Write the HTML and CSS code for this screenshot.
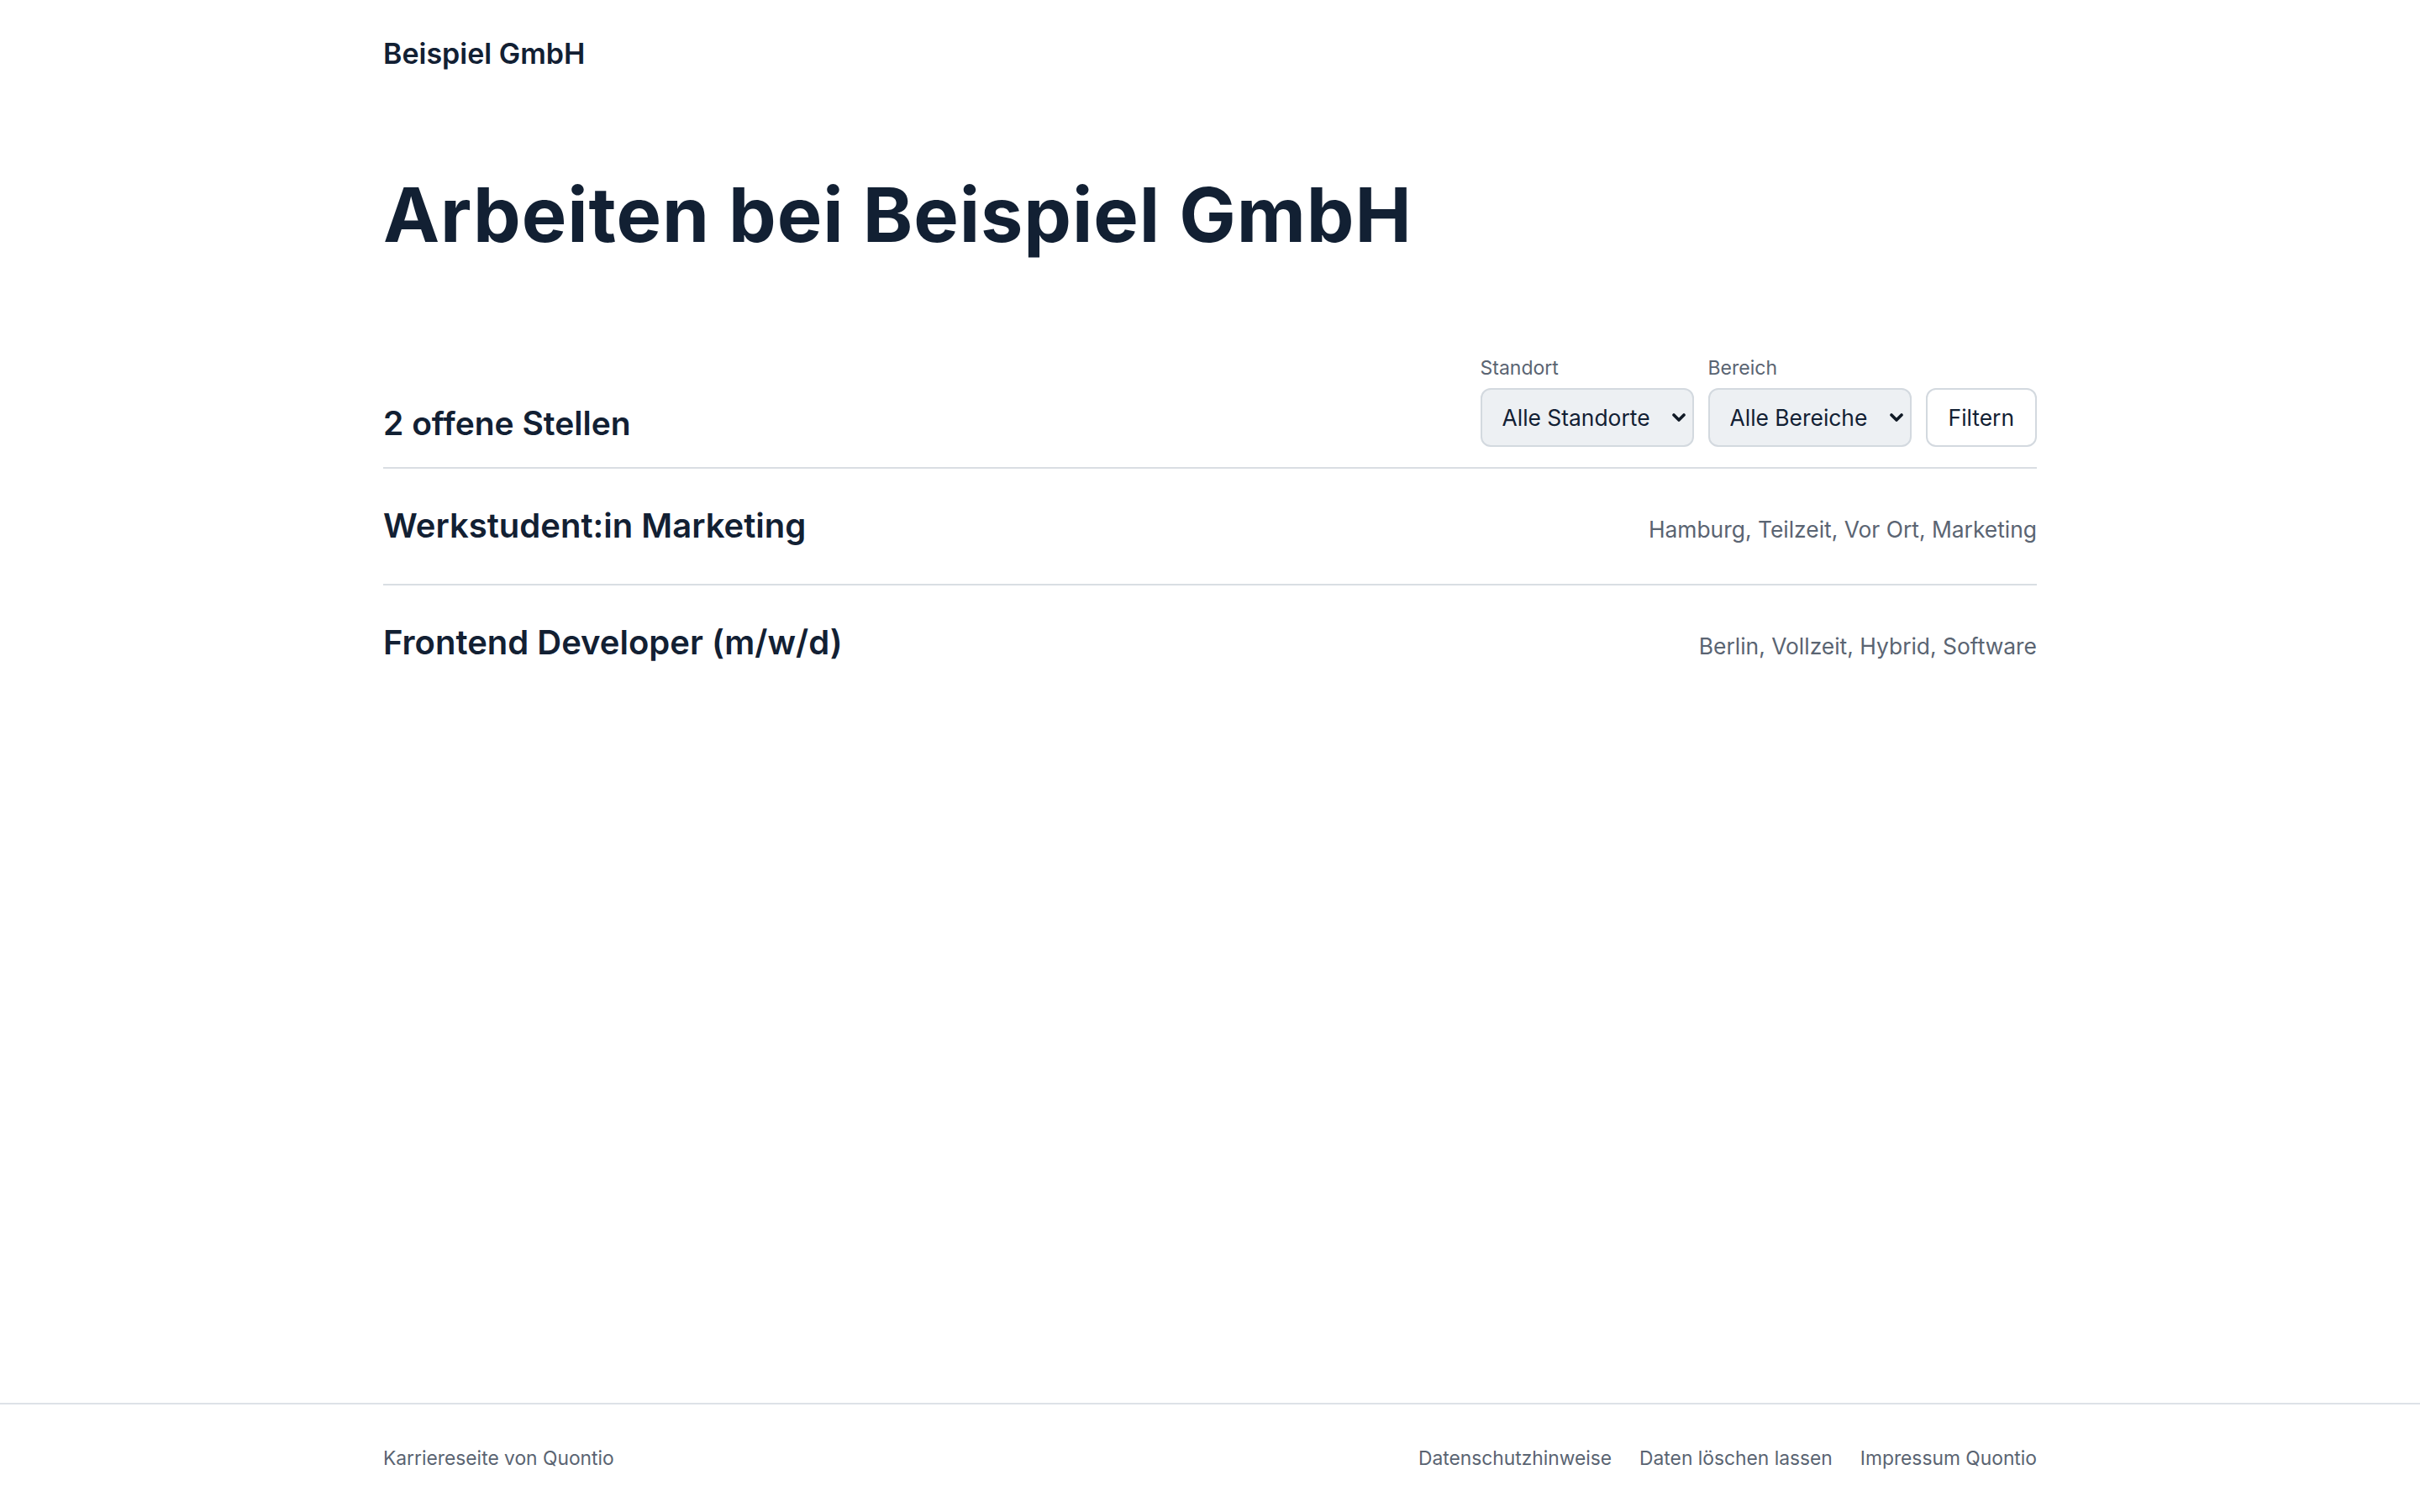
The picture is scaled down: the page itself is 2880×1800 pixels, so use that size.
FILE: index.html
```html
<!DOCTYPE html>
<html lang="de">
<head>
<meta charset="utf-8">
<title>Arbeiten bei Beispiel GmbH</title>
<link rel="stylesheet" href="styles.css">
</head>
<body>
<div class="page">
  <header class="site-header">
    <div class="wrap">
      <a class="logo" href="#">Beispiel GmbH</a>
    </div>
  </header>

  <main class="main">
    <div class="wrap">
      <h1 class="hero-title">Arbeiten bei Beispiel GmbH</h1>

      <section class="jobs">
        <div class="jobs-head">
          <h2 class="jobs-count">2 offene Stellen</h2>
          <form class="filters">
            <div class="field">
              <label class="field-label" for="loc">Standort</label>
              <div class="select-wrap">
                <select id="loc" class="select"><option>Alle Standorte</option></select>
                <svg class="chevron" viewBox="0 0 16 12" aria-hidden="true"><path d="M2 3l6 6 6-6" fill="none" stroke="#111a26" stroke-width="3.6" stroke-linecap="round" stroke-linejoin="round"/></svg>
              </div>
            </div>
            <div class="field">
              <label class="field-label" for="area">Bereich</label>
              <div class="select-wrap">
                <select id="area" class="select"><option>Alle Bereiche</option></select>
                <svg class="chevron" viewBox="0 0 16 12" aria-hidden="true"><path d="M2 3l6 6 6-6" fill="none" stroke="#111a26" stroke-width="3.6" stroke-linecap="round" stroke-linejoin="round"/></svg>
              </div>
            </div>
            <button type="button" class="btn">Filtern</button>
          </form>
        </div>

        <ul class="job-list">
          <li class="job">
            <a class="job-title" href="#">Werkstudent:in Marketing</a>
            <span class="job-meta">Hamburg, Teilzeit, Vor Ort, Marketing</span>
          </li>
          <li class="job">
            <a class="job-title" href="#">Frontend Developer (m/w/d)</a>
            <span class="job-meta">Berlin, Vollzeit, Hybrid, Software</span>
          </li>
        </ul>
      </section>
    </div>
  </main>

  <footer class="site-footer">
    <div class="wrap footer-inner">
      <span class="footer-text">Karriereseite von Quontio</span>
      <nav class="footer-links">
        <a href="#">Datenschutzhinweise</a>
        <a href="#">Daten löschen lassen</a>
        <a href="#">Impressum Quontio</a>
      </nav>
    </div>
  </footer>
</div>
</body>
</html>
```

FILE: styles.css
```css
* { box-sizing: border-box; }

html, body {
  margin: 0;
  padding: 0;
  background: #ffffff;
}

body {
  font-family: Inter, "Noto Sans", "Liberation Sans", sans-serif;
  color: #122033;
}

a { color: inherit; text-decoration: none; }

.page {
  min-height: 100vh;
  display: flex;
  flex-direction: column;
}

.wrap {
  max-width: 1968px;
  margin: 0 auto;
  width: 100%;
}

/* Header */
.site-header {
  padding: 40px 0;
}

.logo {
  display: block;
  font-size: 34px;
  line-height: 48px;
  font-weight: 600;
}

/* Main */
.main {
  flex: 1;
}

.hero-title {
  margin: 75px 0 0;
  font-size: 90px;
  line-height: 106px;
  font-weight: 700;
  letter-spacing: 0.9px;
}

.jobs {
  margin-top: 113px;
}

.jobs-head {
  display: flex;
  justify-content: space-between;
  align-items: flex-end;
  padding-bottom: 24px;
  border-bottom: 2px solid #d9dee3;
}

.jobs-count {
  margin: 0;
  font-size: 39px;
  line-height: 56px;
  font-weight: 600;
}

.filters {
  display: flex;
  align-items: flex-end;
  gap: 17px;
  margin: 0;
}

.field {
  display: flex;
  flex-direction: column;
  gap: 8px;
}

.field-label {
  font-size: 23px;
  line-height: 32px;
  color: #5a6472;
}

.select-wrap {
  position: relative;
  display: flex;
}

.select {
  appearance: none;
  -webkit-appearance: none;
  height: 70px;
  margin: 0;
  padding: 0 50px 0 24px;
  font-family: inherit;
  font-size: 26.4px;
  color: #122033;
  background: #edf0f3;
  border: 2px solid #d3d9df;
  border-radius: 12px;
}

.chevron {
  position: absolute;
  right: 10px;
  top: 50%;
  width: 16px;
  height: 12px;
  margin-top: -6px;
  pointer-events: none;
}

.btn {
  height: 70px;
  margin: 0;
  padding: 0 25px;
  font-family: inherit;
  font-size: 26.4px;
  color: #122033;
  background: #ffffff;
  border: 2px solid #d3d9df;
  border-radius: 12px;
}

.job-list {
  list-style: none;
  margin: 0;
  padding: 0;
}

.job {
  display: flex;
  justify-content: space-between;
  align-items: baseline;
  padding: 40px 0 41px;
}

.job + .job {
  border-top: 2px solid #d9dee3;
}

.job-title {
  font-size: 40px;
  line-height: 56px;
  font-weight: 600;
}

.job-meta {
  font-size: 26.4px;
  line-height: 40px;
  color: #5a6472;
}

/* Footer */
.site-footer {
  border-top: 2px solid #dde2e7;
  padding: 48px 0;
}

.footer-inner {
  display: flex;
  justify-content: space-between;
  align-items: center;
  font-size: 22.8px;
  line-height: 32px;
  color: #5a6472;
}

.footer-links {
  display: flex;
  gap: 33px;
}
```
